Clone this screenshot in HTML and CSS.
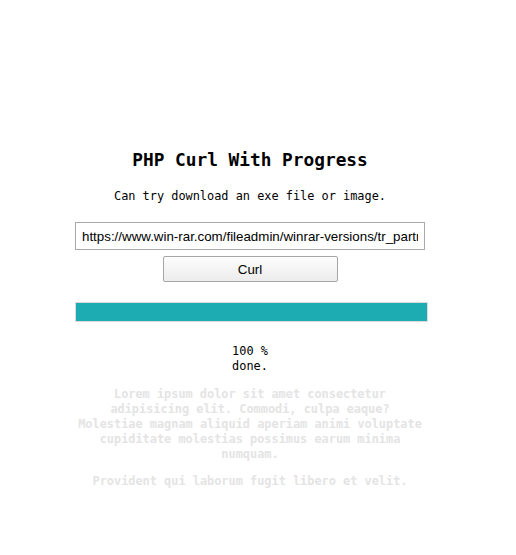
FILE: index.html
```html
<!DOCTYPE html>
<html>
<head>
<meta charset="utf-8">
<link rel="stylesheet" href="styles.css">
</head>
<body>
<div class="wrap">
  <h1 class="title">PHP Curl With Progress</h1>
  <p class="sub">Can try download an exe file or image.</p>
  <form class="form">
    <input class="url" type="text" value="https://www.win-rar.com/fileadmin/winrar-versions/tr_partner/winrar-x64-621tr.exe">
    <button class="btn" type="button">Curl</button>
  </form>
  <div class="progress"><div class="fill" style="width:100%"></div></div>
  <div class="status">100 %<br>done.</div>
  <div class="lorem">
    <p>Lorem ipsum dolor sit amet consectetur adipisicing elit. Commodi, culpa eaque? Molestiae magnam aliquid aperiam animi voluptate cupiditate molestias possimus earum minima numquam.</p>
    <p>Provident qui laborum fugit libero et velit.</p>
  </div>
</div>
</body>
</html>
```
FILE: styles.css
```css
html, body { margin: 0; padding: 0; background: #fff; }
body { font-family: "DejaVu Sans Mono", monospace; font-size: 11.9px; color: #000; }
.wrap { width: 500px; display: flex; flex-direction: column; align-items: center; text-align: center; padding-top: 149px; }
.title { font-size: 17.8px; font-weight: bold; margin: 0; line-height: 22px; }
.sub { margin: 18px 0 0; line-height: 15px; }
.form { margin-top: 18px; display: flex; flex-direction: column; align-items: center; gap: 6px; }
.url { box-sizing: border-box; width: 350px; height: 28px; border: 1px solid #a9a9a9; padding: 0 6px; font-family: "Liberation Sans", Arial, sans-serif; font-size: 13.33px; color: #000; margin: 0; outline: none; }
.btn { box-sizing: border-box; width: 175px; height: 26px; border: 1px solid #a6a6a6; border-radius: 2px; background: linear-gradient(#fdfdfd, #ececec); font-family: "Liberation Sans", Arial, sans-serif; font-size: 13.33px; color: #000; margin: 0; padding: 0; }
.progress { margin-top: 20px; margin-left: 3px; box-sizing: border-box; width: 353px; height: 20px; border: 1px solid #dcdcdc; }
.fill { height: 100%; background: #1eacb3; }
.status { margin-top: 22px; line-height: 15px; }
.lorem { margin-top: 13px; width: 350px; color: #e4e4e4; font-weight: bold; line-height: 15px; }
.lorem p { margin: 0 0 12px; }
```
